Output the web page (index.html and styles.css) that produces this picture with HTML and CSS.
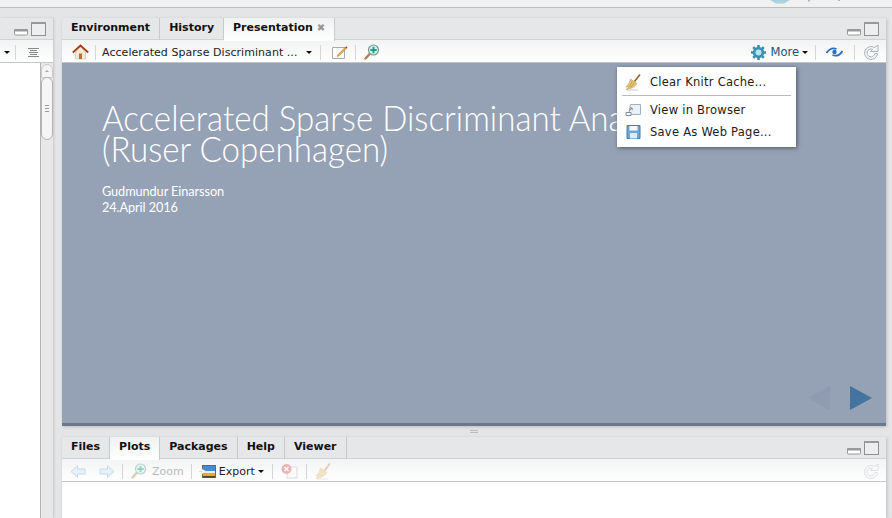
FILE: index.html
```html
<!DOCTYPE html>
<html>
<head>
<meta name="viewport" content="width=device-width, initial-scale=1.0">
<link rel="stylesheet" href="styles.css">
</head>
<body>

<!--strip left over from the main toolbar-->
<div class="topstrip">
  <svg class="top-icon" width="74" height="4" viewBox="0 0 74 4">
    <path d="M0 0h20l-6 3.500H6z" fill="#a9d3dd"/>
    <path d="M38 0h2v1.500h-2zM68 0h2v1h-2z" fill="#b5b5b5"/>
  </svg>
</div>

<div class="workspace">

  <div class="leftpane">
    <div class="tabbar">
      <div class="winbtns">
        <svg width="14" height="8" viewBox="0 0 14 8"><rect x="0.500" y="1.500" width="13" height="5.500" rx="1" fill="#fff" stroke="#999"/><rect x="0" y="1" width="14" height="2.500" rx="1" fill="#999"/></svg>
        <svg width="15" height="14" viewBox="0 0 15 14"><rect x="0.500" y="0.500" width="14" height="13" fill="#eee" stroke="#8f8f8f"/><rect x="0" y="0" width="15" height="2" fill="#999"/></svg>
      </div>
    </div>
    <div class="toolbar leftbar">
      <span class="caret"></span>
      <span class="sep"></span>
      <svg width="13" height="9" viewBox="0 0 13 9"><path d="M1 .5h11M3 2.500h7M2 4.500h9M3 6.500h7M1 8.500h11" stroke="#888" fill="none"/></svg>
    </div>
    <div class="leftbody">
      <div class="scrollbar">
        <div class="scrollup"></div>
        <div class="thumb"><span></span><span></span><span></span></div>
      </div>
    </div>
  </div>

  <div class="maincol">

    <div class="pane toppane">
      <div class="tabbar">
        <div class="tab">Environment</div>
        <div class="tab">History</div>
        <div class="tab active">Presentation <span class="closex">✖</span></div>
        <div class="winbtns">
          <svg width="14" height="8" viewBox="0 0 14 8"><rect x="0.500" y="1.500" width="13" height="5.500" rx="1" fill="#fff" stroke="#999"/><rect x="0" y="1" width="14" height="2.500" rx="1" fill="#999"/></svg>
          <svg width="15" height="14" viewBox="0 0 15 14"><rect x="0.500" y="0.500" width="14" height="13" fill="#eee" stroke="#8f8f8f"/><rect x="0" y="0" width="15" height="2" fill="#999"/></svg>
        </div>
      </div>
      <div class="toolbar presbar">
        <svg class="ico" width="17" height="16" viewBox="0 0 17 16">
          <path d="M3.500 8v7h10V8L8.500 3z" fill="#f3ead8" stroke="#c9bda5" stroke-width=".6"/>
          <rect x="7" y="9.500" width="3" height="5.500" fill="#b5703a"/>
          <path d="M.8 8.500L8.500 1.500l7.700 7" fill="none" stroke="#a83a12" stroke-width="1.700"/>
        </svg>
        <span class="sep"></span>
        <span class="doc-title">Accelerated Sparse Discriminant ...</span>
        <span class="caret"></span>
        <span class="sep after-title"></span>
        <svg class="ico" width="19" height="16" viewBox="0 0 19 16">
          <path d="M1.500 3.500h12v11h-12z" fill="#fcfcfc" stroke="#aaa"/>
          <path d="M7 10.500l7-7 1.200 1.200-7 7-2 .800z" fill="#eebd55" stroke="#8b6d22" stroke-width=".5"/>
          <path d="M14 3.500l1.300-1.300 1.200 1.200-1.300 1.300z" fill="#c4343c"/>
        </svg>
        <span class="sep after-edit"></span>
        <svg class="ico" width="16" height="16" viewBox="0 0 16 16">
          <path d="M6 9.500L1.500 14.500" stroke="#b1824f" stroke-width="2.400" stroke-linecap="round"/>
          <circle cx="9.500" cy="6" r="5" fill="#dff2ee" stroke="#6f9c98" stroke-width="1.200"/>
          <path d="M9.500 2.800v6.400M6.300 6h6.400" stroke="#1aa083" stroke-width="2"/>
        </svg>
        <span class="spacer"></span>
        <svg class="ico" width="17" height="17" viewBox="0 0 17 17">
          <circle cx="8.500" cy="8.500" r="5.800" fill="#4b9dbd"/>
          <path d="M8.500 1v15M1 8.500h15M3.200 3.200l10.600 10.600M13.800 3.200L3.200 13.800" stroke="#3d8daf" stroke-width="2.600"/>
          <circle cx="8.500" cy="8.500" r="3" fill="#b9e3ee"/>
        </svg>
        <span class="more">More</span>
        <span class="caret"></span>
        <span class="sep after-more"></span>
        <svg class="ico" width="17" height="12" viewBox="0 0 17 12">
          <path d="M.5 7C2.500 3.800 5 2.300 7.500 2.300c1 0 2 .2 3 .7" fill="none" stroke="#2f6fc0" stroke-width="1.800"/>
          <path d="M16.500 5C14.500 8.200 12 9.700 9.500 9.700c-1 0-2-.2-3-.7" fill="none" stroke="#2f6fc0" stroke-width="1.800"/>
          <circle cx="8.500" cy="6" r="2.200" fill="#2f6fc0"/>
        </svg>
        <span class="sep after-sync"></span>
        <svg class="ico" width="16" height="16" viewBox="0 0 16 16">
          <path d="M11.500 3.500A6.500 6.500 0 1 0 14.500 9.500H11.800A3.900 3.900 0 1 1 9.600 5.400L7.500 7.500H15V1z" fill="#f4f6f7" stroke="#a9b3bc"/>
        </svg>
      </div>
      <div class="slide">
        <h1 class="slide-title">Accelerated Sparse Discriminant Analysis<br>(Ruser Copenhagen)</h1>
        <p class="slide-meta">Gudmundur Einarsson<br>24.April 2016</p>
        <div class="arrow prev"></div>
        <div class="arrow next"></div>
      </div>
      <div class="menu">
        <div class="menuitem">
          <svg width="17" height="17" viewBox="0 0 17 17">
            <path d="M2 16h11" stroke="#cfd3d8" stroke-width="1.200"/>
            <path d="M9.500 7.500l5.500-7" stroke="#9c5a2a" stroke-width="1.600"/>
            <path d="M5.500 5l6.500 4.500c-2 3.500-6 5.500-11 6 2-1.300 3-2.800 3-2.800-1 .5-2 .5-3.200.3C3 11.500 4.500 8.500 5.500 5z" fill="#e3c272" stroke="#b8964a" stroke-width=".5"/>
            <path d="M7 7.500L4.500 13M9 8.500l-3 5" stroke="#b8964a" stroke-width=".6"/>
          </svg>
          <span>Clear Knitr Cache...</span>
        </div>
        <div class="menusep"></div>
        <div class="menuitem">
          <svg width="17" height="14" viewBox="0 0 17 14">
            <path d="M5.500 1.500h10v10h-12z" fill="#e9f0f6" stroke="#9fb0bf"/>
            <path d="M1 9.500h5v3H1z" fill="#fff" stroke="#7d8c99"/>
            <path d="M4 8l3-3M5 5h2.200v2.200" fill="none" stroke="#7d8c99"/>
          </svg>
          <span>View in Browser</span>
        </div>
        <div class="menuitem">
          <svg width="16" height="14" viewBox="0 0 14 14">
            <path d="M.5 .5h13v13H.500z" fill="#6fa8d6" stroke="#3f7fb0"/>
            <rect x="3" y="1" width="8" height="4.500" fill="#f4f8fb"/>
            <rect x="3.500" y="8" width="7" height="5.500" fill="#dfeaf3"/>
          </svg>
          <span>Save As Web Page...</span>
        </div>
      </div>
    </div>

    <div class="splitter"><span></span></div>

    <div class="pane bottompane">
      <div class="tabbar">
        <div class="tab">Files</div>
        <div class="tab active">Plots</div>
        <div class="tab">Packages</div>
        <div class="tab">Help</div>
        <div class="tab">Viewer</div>
        <div class="winbtns">
          <svg width="14" height="8" viewBox="0 0 14 8"><rect x="0.500" y="1.500" width="13" height="5.500" rx="1" fill="#fff" stroke="#999"/><rect x="0" y="1" width="14" height="2.500" rx="1" fill="#999"/></svg>
          <svg width="15" height="14" viewBox="0 0 15 14"><rect x="0.500" y="0.500" width="14" height="13" fill="#eee" stroke="#8f8f8f"/><rect x="0" y="0" width="15" height="2" fill="#999"/></svg>
        </div>
      </div>
      <div class="toolbar plotbar">
        <svg class="ico back" width="16" height="13" viewBox="0 0 16 13"><path d="M7.500 .8L1 6.500l6.500 5.700V9h7.500V4H7.500z" fill="#e6f1f8" stroke="#c3dcec"/></svg>
        <svg class="ico fwd" width="16" height="13" viewBox="0 0 16 13"><path d="M8.500 .8L15 6.500l-6.500 5.700V9H1V4h7.500z" fill="#e6f1f8" stroke="#c3dcec"/></svg>
        <span class="sep after-fwd"></span>
        <svg class="ico" width="16" height="16" viewBox="0 0 16 16">
          <path d="M6 9.500L1.500 14.500" stroke="#e0cdb6" stroke-width="2.400" stroke-linecap="round"/>
          <circle cx="9.500" cy="6" r="5" fill="#eef8f6" stroke="#bcd2d0" stroke-width="1.200"/>
          <path d="M9.500 2.800v6.400M6.300 6h6.400" stroke="#96d0c2" stroke-width="2"/>
        </svg>
        <span class="dim">Zoom</span>
        <span class="sep after-zoom"></span>
        <svg class="ico" width="17" height="13" viewBox="0 0 17 13">
          <rect x="3.500" y=".5" width="13" height="12" fill="#4a8ad0" stroke="#666"/>
          <rect x="4" y="6" width="12" height="2.500" fill="#f0f0e0"/>
          <rect x="4" y="8" width="12" height="3" fill="#eea62c"/>
          <rect x="4" y="11" width="12" height="1.500" fill="#5a4420"/>
          <path d="M0 6.500h3V4l4 2.500L3 9V6.500z" fill="#fff" stroke="#ccc" stroke-width=".4"/>
        </svg>
        <span class="export">Export</span>
        <span class="caret"></span>
        <span class="sep"></span>
        <svg class="ico" width="17" height="16" viewBox="0 0 17 16">
          <rect x="6" y="4" width="10" height="11" fill="#fafafa" stroke="#ddd"/>
          <circle cx="5.500" cy="6" r="5" fill="#eeb3b3"/>
          <path d="M3.500 4l4 4M7.500 4l-4 4" stroke="#fff" stroke-width="1.400"/>
        </svg>
        <span class="sep"></span>
        <svg class="ico" width="17" height="17" viewBox="0 0 17 17">
          <path d="M2 16h11" stroke="#e6e8ea" stroke-width="1.200"/>
          <path d="M9.500 7.500l5.500-7" stroke="#dfc9b5" stroke-width="1.600"/>
          <path d="M5.500 5l6.500 4.500c-2 3.500-6 5.500-11 6 2-1.300 3-2.800 3-2.800-1 .5-2 .5-3.200.3C3 11.500 4.500 8.500 5.500 5z" fill="#f1e4c4" stroke="#e2d5b4" stroke-width=".5"/>
        </svg>
        <span class="spacer"></span>
        <svg class="ico" width="16" height="16" viewBox="0 0 16 16">
          <path d="M11.500 3.500A6.500 6.500 0 1 0 14.500 9.500H11.800A3.900 3.900 0 1 1 9.600 5.400L7.500 7.500H15V1z" fill="#f8f9fa" stroke="#dde2e5"/>
        </svg>
      </div>
      <div class="plotbody"></div>
    </div>

  </div>
</div>

</body>
</html>
```

FILE: styles.css
```css
* {box-sizing: border-box;}

html, body {
  margin: 0;
  height: 100%;
  overflow: hidden;
}

body {
  background: #e4e5e6;
  font-family: "DejaVu Sans", sans-serif;
  font-size: 11px;
  color: #1c1c1c;
  display: flex;
  flex-direction: column;
}

/*top strip*/

.topstrip {
  height: 8px;
  background: #f1f1f1;
  border-bottom: 1px solid #bdbdbd;
  padding-left: 770px;
  flex-shrink: 0;
}

.top-icon {
  display: block;
}

.workspace {
  flex: 1;
  display: flex;
  padding: 10px 6px 0 0;
  gap: 9px;
  min-height: 0;
}

/*left pane*/

.leftpane {
  width: 53px;
  display: flex;
  flex-direction: column;
  flex-shrink: 0;
  box-shadow: 1px 0 2px #c4c4c4;
}

.leftbody {
  flex: 1;
  background: #fff;
  display: flex;
  justify-content: flex-end;
}

.scrollbar {
  width: 13px;
  background: #e8e8e8;
  border-left: 1px solid #b5b2af;
  padding-top: 1px;
  display: flex;
  flex-direction: column;
  align-items: center;
}

.scrollup {
  width: 12px;
  height: 14px;
  border: 1px solid #ccc;
  border-radius: 6px 6px 0 0;
  background: #f4f4f4;
  flex-shrink: 0;
  display: flex;
  justify-content: center;
  padding-top: 5px;
}

.scrollup::before {
  content: "";
  width: 0;
  height: 0;
  border-left: 2px solid transparent;
  border-right: 2px solid transparent;
  border-bottom: 2px solid #aaa;
}

.thumb {
  width: 12px;
  height: 63px;
  margin-top: -1px;
  border: 1px solid #b3b3b3;
  border-radius: 6px;
  background: #f5f5f5;
  display: flex;
  flex-direction: column;
  align-items: center;
  justify-content: center;
  gap: 2px;
}

.thumb span {
  width: 4px;
  height: 1px;
  background: #999;
}

/*panes, tabs and toolbars*/

.maincol {
  flex: 1;
  min-width: 0;
  display: flex;
  flex-direction: column;
}

.pane {
  display: flex;
  flex-direction: column;
  box-shadow: 1px 1px 3px #bdbdbd;
  position: relative;
}

.toppane {
  height: 408px;
}

.bottompane {
  flex: 1;
  min-height: 0;
}

.tabbar {
  height: 22px;
  background: #e6e7e8;
  border-bottom: 1px solid #d0d2d4;
  display: flex;
  flex-shrink: 0;
  border-radius: 2px 2px 0 0;
}

.tab {
  height: 22px;
  padding: 3px 9px 0;
  font-weight: bold;
  color: #111;
  border-right: 1px solid #c8c9ca;
  white-space: nowrap;
}

.tab.active {
  background: linear-gradient(#f0f1f1, #fff);
  height: 23px;
  position: relative;
}

.closex {
  font-size: 10px;
  font-weight: normal;
  color: #999;
}

.winbtns {
  margin-left: auto;
  display: flex;
  align-items: flex-start;
  gap: 3px;
  padding: 4px 7px 0 0;
}

.winbtns svg:first-child {
  margin-top: 6px;
}

.toolbar {
  height: 23px;
  background: linear-gradient(#f2f3f3, #fff);
  border-bottom: 1px solid #c2c6ca;
  display: flex;
  align-items: center;
  padding: 2px 7px 0 10px;
  flex-shrink: 0;
}

.leftbar {
  padding: 2px 0 0 4px;
}

.leftbar .sep {
  margin: 0 11px 0 5px;
}

.sep {
  width: 1px;
  height: 15px;
  background: #d4d6d8;
  margin: 0 8px;
  flex-shrink: 0;
}

.caret {
  width: 0;
  height: 0;
  border-left: 3px solid transparent;
  border-right: 3px solid transparent;
  border-top: 3px solid #111;
  flex-shrink: 0;
}

.ico {
  flex-shrink: 0;
}

.spacer {
  flex: 1;
}

.presbar .sep {
  margin: 0 6px;
}

.doc-title {
  width: 204px;
  white-space: nowrap;
  letter-spacing: .05px;
  color: #222;
}

.presbar .after-title {
  margin: 0 10px 0 8px;
}

.presbar .after-edit {
  margin: 0 8px 0 5px;
}

.more {
  font-size: 11.500px;
  color: #1d4f7c;
  margin: 0 3px;
}

.presbar .after-more {
  margin: 0 10px 0 7px;
}

.presbar .after-sync {
  margin: 0 8px 0 11px;
}

.back {
  margin-left: -2px;
}

.fwd {
  margin-left: 13px;
}

.plotbar .after-fwd {
  margin-left: 7px;
}

.plotbar .after-zoom {
  margin: 0 7px 0 7px;
}

.dim {
  color: #bbb;
  margin-left: 5px;
}

.export {
  margin: 0 3px;
}

.plotbody {
  flex: 1;
  background: #fff;
}

.splitter {
  height: 11px;
  display: flex;
  align-items: center;
  justify-content: center;
  flex-shrink: 0;
}

.splitter span {
  width: 8px;
  height: 3px;
  border-top: 1px solid #bbb;
  border-bottom: 1px solid #bbb;
}

/*slide*/

.slide {
  flex: 1;
  background: #95a1b4;
  border-bottom: 3px solid #6c7789;
  padding: 39px 0 0 40px;
  color: #fff;
  position: relative;
  overflow: hidden;
}

.slide-title {
  margin: 0;
  font-family: Lato, sans-serif;
  font-weight: 300;
  font-size: 36px;
  line-height: 31px;
  white-space: nowrap;
  transform: scaleX(.92);
  transform-origin: left top;
}

.slide-meta {
  margin: 19px 0 0;
  font-family: Lato, sans-serif;
  font-weight: 400;
  font-size: 14px;
  line-height: 16px;
  letter-spacing: -.1px;
  transform: scaleX(.91);
  transform-origin: left top;
}

.arrow {
  position: absolute;
  top: 323px;
  width: 0;
  height: 0;
  border-top: 12px solid transparent;
  border-bottom: 12px solid transparent;
}

.arrow.next {
  left: 788px;
  border-left: 22px solid #42749f;
}

.arrow.prev {
  left: 746px;
  border-right: 22px solid #8f9bb0;
}

/*dropdown menu*/

.menu {
  position: absolute;
  left: 555px;
  top: 49px;
  width: 179px;
  height: 80px;
  background: #fff;
  box-shadow: 1px 1px 4px #4d5666;
  padding: 4px 5px;
}

.menuitem {
  display: flex;
  align-items: center;
  gap: 8px;
  height: 22px;
  padding-left: 3px;
  font-size: 11.500px;
  letter-spacing: .25px;
  white-space: nowrap;
}

.menuitem svg {
  flex-shrink: 0;
  width: 17px;
}

.menusep {
  height: 1px;
  background: #bbb;
  margin: 2px 0 3px;
}
```
